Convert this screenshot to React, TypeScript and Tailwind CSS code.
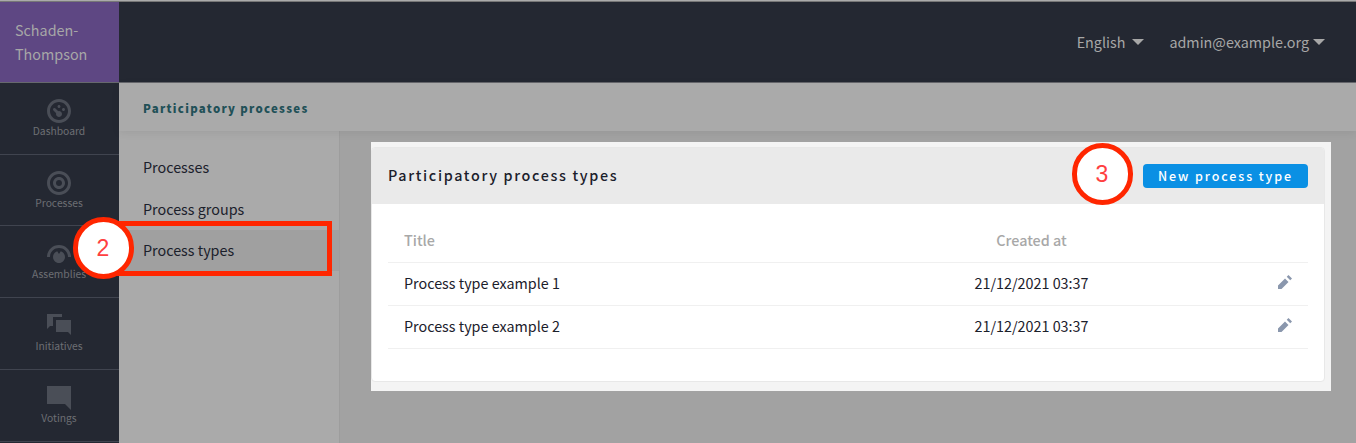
import type { ReactNode } from "react";

const icons = {
  dashboard:
    "M4 0c-2.2 0-4 1.8-4 4s1.8 4 4 4 4-1.8 4-4-1.8-4-4-4zm0 1c1.66 0 3 1.34 3 3s-1.34 3-3 3-3-1.34-3-3 1.34-3 3-3zm0 1c-.28 0-.5.22-.5.5s.22.5.5.5.5-.22.5-.5-.22-.5-.5-.5zm-1.66 1a.5.5 0 0 0-.19.84l.91.91c-.02.08-.06.16-.06.25 0 .55.45 1 1 1s1-.45 1-1-.45-1-1-1c-.09 0-.17.04-.25.06l-.91-.91a.5.5 0 0 0-.5-.15zm3.16 0c-.28 0-.5.22-.5.5s.22.5.5.5.5-.22.5-.5-.22-.5-.5-.5z",
  target:
    "M4 0c-2.2 0-4 1.8-4 4s1.8 4 4 4 4-1.8 4-4-1.8-4-4-4zm0 1c1.66 0 3 1.34 3 3s-1.34 3-3 3-3-1.34-3-3 1.34-3 3-3zm0 1c-1.1 0-2 .9-2 2s.9 2 2 2 2-.9 2-2-.9-2-2-2zm0 1c.56 0 1 .44 1 1s-.44 1-1 1-1-.44-1-1 .44-1 1-1z",
  dial: "M4 1c-2.2 0-4 1.8-4 4h1c0-1.66 1.34-3 3-3s3 1.34 3 3h1c0-2.2-1.8-4-4-4zm-.59 2.09c-.81.25-1.41 1.01-1.41 1.91 0 1.11.89 2 2 2 1.11 0 2-.89 2-2 0-.9-.59-1.65-1.41-1.91l-.59.88-.59-.88z",
  chat: "M0 0v5l1-1h1v-3h3v-1h-5zm3 2v4h4l1 1v-5h-5z",
  comment: "M0 0v6h6l2 2v-8h-8z",
  pencil: "M6 0l-1 1 2 2 1-1-2-2zm-2 2l-4 4v2h2l4-4-2-2z",
};

function Icon({ name, className }: { name: keyof typeof icons; className: string }) {
  return (
    <svg viewBox="0 0 8 8" className={className} fill="currentColor" aria-hidden="true">
      <path d={icons[name]} />
    </svg>
  );
}

function Caret() {
  return (
    <svg viewBox="0 0 12 6" className="h-[6px] w-[12px]" fill="currentColor" aria-hidden="true">
      <path d="M0 0h12l-6 6z" />
    </svg>
  );
}

function SideItem({ icon, label, height }: { icon: keyof typeof icons; label: string; height: string }) {
  return (
    <a className={`flex w-[118px] shrink-0 flex-col items-center pt-4 text-[#6d6f74] ${height}`}>
      <Icon name={icon} className="size-6 text-[#4a4e57]" />
      <span className="text-[10.3px] leading-4">{label}</span>
    </a>
  );
}

function Step({ children, className }: { children: ReactNode; className: string }) {
  return (
    <div
      className={`absolute flex h-[62px] w-[61px] items-center justify-center rounded-full border-[5px] border-[#ff2600] bg-white pr-px pt-[1px] font-['Liberation_Sans',sans-serif] text-[23px] leading-none text-[#ff4040] ${className}`}
    >
      {children}
    </div>
  );
}

const rows = [
  { title: "Process type example 1", created: "21/12/2021 03:37" },
  { title: "Process type example 2", created: "21/12/2021 03:37" },
];

export default function App() {
  return (
    <div className="relative flex h-[443px] w-[1356px] flex-col overflow-hidden bg-[#a2a2a2] font-['Noto_Sans_CJK_SC',sans-serif] text-[14.35px] text-[#1b202b]">
      <div className="h-[2px] shrink-0 border-b border-[#777] bg-[#aaa]" />
      <header className="flex h-[81px] shrink-0 border-b border-[#66686d] bg-[#242832] text-[#a7a7a7]">
        <div className="w-[119px] bg-[#5e4783] pt-[16px] pl-[15px] leading-6">
          Schaden-
          <br />
          Thompson
        </div>
        <div className="flex flex-1 items-center justify-end pr-[31px]">
          <span className="mr-[7px]">English</span>
          <Caret />
          <span className="mr-1 ml-[25px]">admin@example.org</span>
          <Caret />
        </div>
      </header>
      <div className="flex min-h-0 flex-1">
        <nav className="flex w-[119px] shrink-0 flex-col bg-[#242832] [&>div]:border-b [&>div]:border-[#40444f]">
          <div>
            <SideItem icon="dashboard" label="Dashboard" height="h-[71px]" />
          </div>
          <div>
            <SideItem icon="target" label="Processes" height="h-[70px]" />
          </div>
          <div>
            <SideItem icon="dial" label="Assemblies" height="h-[71px]" />
          </div>
          <div>
            <SideItem icon="chat" label="Initiatives" height="h-[71px]" />
          </div>
          <div>
            <SideItem icon="comment" label="Votings" height="h-[71px]" />
          </div>
        </nav>
        <div className="flex flex-1 flex-col">
          <div className="z-10 flex h-12 shrink-0 items-center bg-[#aaa] pt-[3px] pl-6 text-[11.4px] font-black tracking-[1.3px] text-[#215057] shadow-[0_2px_8px_rgba(0,0,0,0.07)]">
            Participatory processes
          </div>
          <div className="flex flex-1">
            <aside className="flex w-[221px] shrink-0 flex-col border-r border-[#9d9d9d] bg-[#aaa] pt-[16px] leading-[40px]">
              <a className="h-[42px] pl-6">Processes</a>
              <a className="h-[41px] pl-6">Process groups</a>
              <a className="h-[41px] bg-[#a0a0a0] pl-6">Process types</a>
            </aside>
            <main className="pt-[11px] pl-[31px]">
              <section className="h-[249px] w-[960px] bg-[#f4f4f4] pt-[5px]">
                <div className="h-[235px] w-[954px] overflow-hidden rounded-[4px] border border-[#e8e8e8] bg-white">
                  <div className="flex h-14 items-center justify-between bg-[#eaeaea] px-4">
                    <h2 className="pb-[2px] text-[14.33px] font-medium tracking-[1.66px]">Participatory process types</h2>
                    <button className="h-6 w-[165px] rounded-[4px] bg-[#0a90e4] text-[12.5px] leading-6 font-medium tracking-[1.9px] text-white">
                      New process type
                    </button>
                  </div>
                  <table className="mx-4 mt-[15px] w-[920px] table-fixed border-collapse">
                    <thead>
                      <tr className="h-[43px] border-b border-[#f0f0f0] text-[#a8a8a8]">
                        <th className="w-[473px] pb-px pl-4 text-left font-medium">Title</th>
                        <th className="w-[341px] pb-px text-center font-medium">Created at</th>
                        <th />
                      </tr>
                    </thead>
                    <tbody>
                      {rows.map((row) => (
                        <tr key={row.title} className="h-[43px] border-b border-[#f0f0f0]">
                          <td className="pb-[2px] pl-4">{row.title}</td>
                          <td className="pb-[2px] text-center">{row.created}</td>
                          <td className="pr-4 pb-[4px]">
                            <Icon name="pencil" className="ml-auto size-[14px] text-[#8a97ad]" />
                          </td>
                        </tr>
                      ))}
                    </tbody>
                  </table>
                </div>
              </section>
            </main>
          </div>
        </div>
      </div>
      <div className="absolute top-[221px] left-[100px] z-20 h-[55px] w-[232px] border-[5px] border-[#ff2600]" />
      <Step className="top-[217px] left-[73px] z-20">2</Step>
      <Step className="top-[143px] left-[1072px] z-20">3</Step>
    </div>
  );
}
